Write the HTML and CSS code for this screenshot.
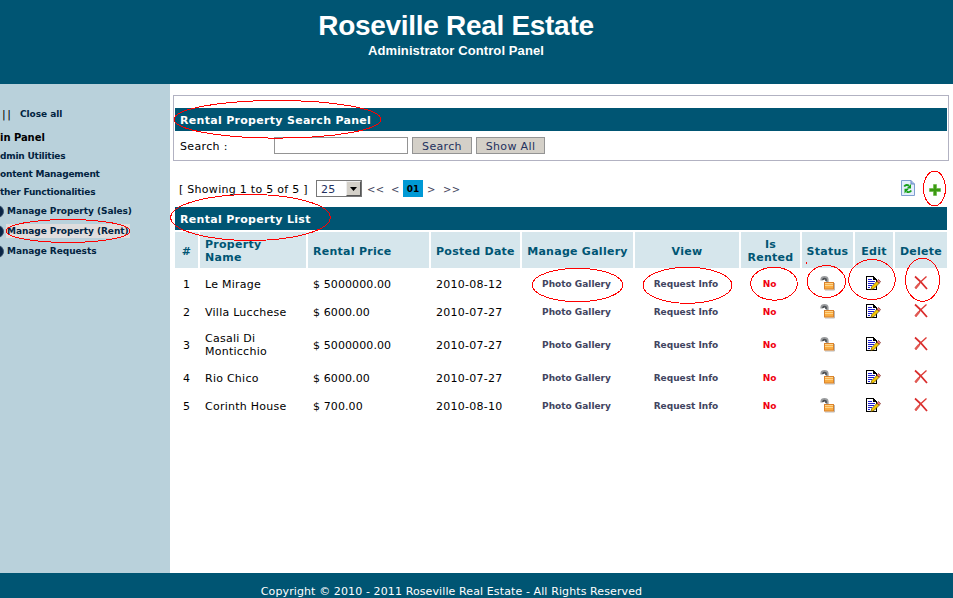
FILE: index.html
```html
<!DOCTYPE html>
<html lang="en">
<head>
<meta charset="utf-8">
<title>Roseville Real Estate</title>
<link rel="stylesheet" href="styles.css">
</head>
<body>
<svg class="defs" width="0" height="0">
  <symbol id="lock" viewBox="0 0 16 16">
    <path d="M2.800 5.500V4.500Q3 2.500 5.500 2.500T8.200 4.500V7" fill="none" stroke="#9a9c9e" stroke-width="2.800"/>
    <path d="M4 5V4.500Q5 3 7 4.200V6" fill="none" stroke="#4a4e52" stroke-width="1.600"/>
    <path d="M6 15h9.500V8" fill="none" stroke="#b9b9b9"/>
    <rect x="5.500" y="7.500" width="9" height="6.500" fill="#f9ac42" stroke="#d9822b"/>
    <path d="M6 8.500h8M6 10.500h8" stroke="#ffd68c"/>
  </symbol>
  <symbol id="edit" viewBox="0 0 16 16">
    <rect x="1" y="1" width="8" height="14" fill="#000"/>
    <rect x="8" y="4" width="4" height="11" fill="#000"/>
    <path d="M9 2h1v1h1v1h1v1H9z" fill="#000"/>
    <rect x="2" y="2" width="6" height="12" fill="#fff"/>
    <rect x="8" y="5" width="3" height="9" fill="#fff"/>
    <g fill="#1c1cd0"><rect x="3" y="4" width="4" height="1"/><rect x="3" y="6" width="7" height="1"/><rect x="3" y="8" width="6" height="1"/><rect x="3" y="10" width="4" height="1"/><rect x="3" y="12" width="2" height="1"/></g>
    <path d="M5.800 14.800l1-3.300L12 6.300l2.200 2L9 13.600z" fill="#f6c800" stroke="#3a2a00" stroke-width=".6"/>
    <path d="M12 6.200l1.500-1.700 2.100 2-1.400 1.700z" fill="#ee7c78" stroke="#500" stroke-width=".5"/>
  </symbol>
  <symbol id="delete" viewBox="0 0 16 16">
    <path d="M2 1.500Q8 6.500 14 14" fill="none" stroke="#d92b2b" stroke-width="1.700"/>
    <path d="M13.500 1.500Q7 6.500 2.500 13.500" fill="none" stroke="#dd3a36" stroke-width="1.500"/>
    <path d="M6 9L2.300 13.300" stroke="#e05a54" stroke-width="2.400"/>
  </symbol>
</svg>
<header class="header">
  <h1>Roseville Real Estate</h1>
  <h2>Administrator Control Panel</h2>
</header>
<div class="body">
  <nav class="sidebar">
    <div class="toggle"><span class="bars">||</span><a>Close all</a></div>
    <div class="root">in Panel</div>
    <a class="group">dmin Utilities</a>
    <a class="group">ontent Management</a>
    <a class="group">ther Functionalities</a>
    <div class="leaf"><i></i><a>Manage Property (Sales)</a></div>
    <div class="leaf"><i></i><a class="active">Manage Property (Rent)</a></div>
    <div class="leaf"><i></i><a>Manage Requests</a></div>
  </nav>
  <main class="main">
    <section class="search">
      <div class="bar">Rental Property Search Panel</div>
      <div class="search-row">
        <label>Search :</label>
        <span class="input"></span>
        <button class="b1">Search</button>
        <button class="b2">Show All</button>
      </div>
    </section>
    <div class="pager">
      <span class="showing">[ Showing 1 to 5 of 5 ]</span>
      <span class="select">25<span class="arrow"><svg width="7" height="4"><path d="M0 0h7L3.500 4z"/></svg></span></span>
      <span class="nav first">&lt;&lt;</span><span class="nav prev">&lt;</span>
      <b class="page">01</b>
      <span class="nav next">&gt;</span><span class="nav last">&gt;&gt;</span>
      <span class="tools">
        <svg class="refresh" width="14" height="16" viewBox="0 0 14 16">
          <path d="M.5.5h9.500l3.500 3.500v11.500H.5z" fill="#e4effc" stroke="#7f9fd0"/>
          <path d="M10 .5v3.500h3.500" fill="#9fbbe6" stroke="#6f8fc6"/>
          <path d="M3.200 6.500Q5 4 8 5.700" fill="none" stroke="#18a018" stroke-width="1.900"/>
          <path d="M10 4v4.500H5.500z" fill="#18a018"/>
          <path d="M10.300 10.500Q8.500 13 5.500 11.700" fill="none" stroke="#18a018" stroke-width="1.900"/>
          <path d="M3.500 13.500V8.800H8z" fill="#18a018"/>
        </svg>
        <svg class="plus" width="12" height="12" viewBox="0 0 12 12"><path d="M4.500.5h3v4h4v3h-4v4h-3v-4h-4v-3h4z" fill="#3c9a12" stroke="#62b63c" stroke-width=".6"/></svg>
      </span>
    </div>
    <div class="bar list-bar">Rental Property List</div>
    <div class="grid head">
      <div class="c">#</div><div>Property<br>Name</div><div>Rental Price</div><div>Posted Date</div><div class="c">Manage Gallery</div><div class="c">View</div><div class="c">Is<br>Rented</div><div class="c">Status</div><div class="c">Edit</div><div class="c">Delete</div>
    </div>
    <div class="grid row"><div class="c">1</div><div>Le Mirage</div><div class="num">$ 5000000.00</div><div>2010-08-12</div><a class="c">Photo Gallery</a><a class="c">Request Info</a><a class="c no">No</a><svg class="lock"><use href="#lock"/></svg><svg class="edit"><use href="#edit"/></svg><svg class="delete"><use href="#delete"/></svg></div>
    <div class="grid row"><div class="c">2</div><div>Villa Lucchese</div><div class="num">$ 6000.00</div><div>2010-07-27</div><a class="c">Photo Gallery</a><a class="c">Request Info</a><a class="c no">No</a><svg class="lock"><use href="#lock"/></svg><svg class="edit"><use href="#edit"/></svg><svg class="delete"><use href="#delete"/></svg></div>
    <div class="grid row tall"><div class="c">3</div><div>Casali Di<br>Monticchio</div><div class="num">$ 5000000.00</div><div>2010-07-27</div><a class="c">Photo Gallery</a><a class="c">Request Info</a><a class="c no">No</a><svg class="lock"><use href="#lock"/></svg><svg class="edit"><use href="#edit"/></svg><svg class="delete"><use href="#delete"/></svg></div>
    <div class="grid row"><div class="c">4</div><div>Rio Chico</div><div class="num">$ 6000.00</div><div>2010-07-27</div><a class="c">Photo Gallery</a><a class="c">Request Info</a><a class="c no">No</a><svg class="lock"><use href="#lock"/></svg><svg class="edit"><use href="#edit"/></svg><svg class="delete"><use href="#delete"/></svg></div>
    <div class="grid row"><div class="c">5</div><div>Corinth House</div><div class="num">$ 700.00</div><div>2010-08-10</div><a class="c">Photo Gallery</a><a class="c">Request Info</a><a class="c no">No</a><svg class="lock"><use href="#lock"/></svg><svg class="edit"><use href="#edit"/></svg><svg class="delete"><use href="#delete"/></svg></div>
  </main>
</div>
<footer class="footer">Copyright © 2010 - 2011 Roseville Real Estate - All Rights Reserved</footer>
<svg class="marks" width="953" height="598">
  <ellipse cx="277.500" cy="119.300" rx="103.500" ry="18.800"/>
  <ellipse cx="250.500" cy="217.500" rx="79.800" ry="23"/>
  <ellipse cx="68" cy="231" rx="62" ry="11.500"/>
  <ellipse cx="577.500" cy="285" rx="45.300" ry="16.700"/>
  <ellipse cx="687.500" cy="285.300" rx="44.500" ry="18"/>
  <ellipse cx="774" cy="283.700" rx="23.300" ry="16.500"/>
  <ellipse cx="826.300" cy="281.500" rx="19.200" ry="16"/>
  <ellipse cx="872" cy="279.500" rx="23.300" ry="20"/>
  <ellipse cx="922.500" cy="279.800" rx="17" ry="21.500"/>
  <ellipse cx="934.500" cy="188.500" rx="11" ry="17.300"/>
  <path d="M806.500 262v2"/>
</svg>
</body>
</html>
```
FILE: styles.css
```css
*{box-sizing:border-box}
body{margin:0;width:953px;height:598px;overflow:hidden;position:relative;background:#fff;color:#000;font:11px/13px "DejaVu Sans",Verdana,sans-serif;letter-spacing:.25px}
.defs{position:absolute}
.header{height:84px;background:#005573;color:#fff;text-align:center;font-family:"Liberation Sans",Arial,sans-serif;padding:10px 41px 0 0}
.header h1{margin:0;font-size:28px;line-height:32px;letter-spacing:-.3px}
.header h2{margin:1px 0 0;font-size:13px;line-height:15px;letter-spacing:.1px}
.body{display:flex;height:489px}
.sidebar{width:170px;background:#b9d1db;overflow:hidden;padding-top:21px;font:bold 9px/18px "DejaVu Sans",sans-serif;letter-spacing:-.05px;color:#012340;white-space:nowrap}
.toggle{display:flex;gap:9px;padding-left:2px;margin-bottom:4px}
.bars{font:11px/19px "DejaVu Sans",sans-serif;letter-spacing:1.500px;color:#000;width:9px}
.root{font:bold 10px/19px "DejaVu Sans",sans-serif;height:19px;color:#000}
.group{display:block;letter-spacing:-.2px}
.leaf{display:flex;align-items:center;height:20px;gap:2px;margin-left:-9px}
.leaf i{width:13px;height:13px;border-radius:50%;background:#0b2545;border:1px solid #39546f;flex:none}
.leaf a{line-height:14px;padding:0 1px}
.leaf .active{background:#e0dddd}
.main{flex:1;padding:11px 4px 0 3px}
.search{border:1px solid #b2b2c2;height:66px;padding:12px 1px 0}
.bar{height:23px;background:#005573;color:#fff;font-weight:bold;line-height:25px;padding-left:5px;letter-spacing:.3px}
.search-row{display:flex;align-items:center;height:29px;padding-left:5px}
.search-row label{width:94px;padding-top:1px;letter-spacing:.35px}
.input{width:134px;height:17px;border:1px solid #949494;margin-right:4px}
button{height:17px;border:1px solid #949494;background:#d4d0c8;color:#23305e;font:11px/14px "DejaVu Sans",sans-serif;letter-spacing:.35px;padding:2px 0 0}
.b1{width:60px;margin-right:4px}
.b2{width:69px}
.pager{display:flex;align-items:center;height:46px;padding:9px 1px 0 6px}
.showing{width:137px;letter-spacing:.28px;padding-top:2px}
.select{display:flex;justify-content:space-between;width:46px;height:17px;border:1px solid #777;padding-left:4px;line-height:17px;color:#23305e}
.arrow{display:flex;align-items:center;justify-content:center;width:15px;background:#d4d0c8;border:1px solid;border-color:#eee #555 #555 #eee}
.nav{color:#44465e;font-size:10px;padding-top:2px}
.first{margin-left:5px;width:24px}
.prev{width:12px}
.page{width:20px;height:17px;background:#0099d5;text-align:center;font:bold 9px/19px "DejaVu Sans",sans-serif;letter-spacing:0}
.next{width:16px;margin-left:4px}
.tools{display:flex;align-items:center;margin-left:auto;padding-right:7px}
.refresh{margin-right:14px;margin-top:-2px}
.plus{margin-top:2px}
.main .list-bar{margin:0 0 2px 2px;width:772px}
.grid{display:grid;grid-template-columns:23px 106px 121px 89px 111px 104px 59px 51px 38px 52px;column-gap:2px;width:772px;margin-left:2px;align-items:center}
.head{height:36px;align-items:stretch;color:#005573;font-weight:bold;letter-spacing:.27px}
.head>div{background:#d6e6ec;display:flex;align-items:center;padding:2px 0 0 5px}
.head>.c{justify-content:center;text-align:center;padding-left:0}
.row{height:28px}
.row:nth-child(5){margin-top:2px}
.row.tall{height:38px}
.row>div{padding-left:5px}
.row>.num{letter-spacing:.1px}
.row>.c{text-align:center;padding:0}
.row>a.c{font:bold 9px/13px "DejaVu Sans",sans-serif;letter-spacing:0;color:#414460;padding:1px 2px 0 0}
.row>a.no{color:#f00010;padding-right:2px}
.row svg{width:16px;height:16px;margin-top:-2px}
.row .lock{margin-left:17px}
.row .edit{margin-left:10px}
.row .delete{margin-left:18px}
.footer{height:25px;background:#005573;color:#fff;text-align:center;line-height:37px;padding-right:50px;letter-spacing:.11px}
.marks{position:absolute;left:0;top:0;fill:none;stroke:#f00;stroke-width:1;pointer-events:none;shape-rendering:crispEdges}
```
